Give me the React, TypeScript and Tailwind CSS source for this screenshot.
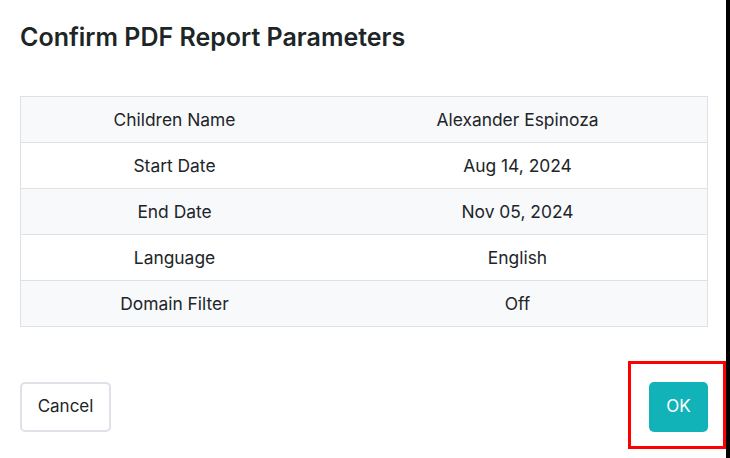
import React from "react";

const rows: [string, string][] = [
  ["Children Name", "Alexander Espinoza"],
  ["Start Date", "Aug 14, 2024"],
  ["End Date", "Nov 05, 2024"],
  ["Language", "English"],
  ["Domain Filter", "Off"],
];

export default function App() {
  return (
    <div
      className="relative w-[730px] h-[458px] bg-white overflow-hidden flex"
      style={{ fontFamily: "Inter, 'Liberation Sans', sans-serif" }}
    >
      <div className="w-[726px] flex flex-col pl-[20px] pt-[19px]">
        <h1 className="text-[25px] leading-[36px] font-semibold text-[#1d2527]">
          Confirm PDF Report Parameters
        </h1>
        <div className="mt-[41px] w-[688px] border-x border-t border-[#dee2e6] text-[17.4px] text-[#212529]">
          {rows.map(([k, v], i) => (
            <div
              key={k}
              className={`grid grid-cols-[307px_1fr] h-[46px] pt-[1px] items-center text-center border-b border-[#dee2e6] ${
                i % 2 === 0 ? "bg-[#f8f9fb]" : "bg-white"
              }`}
            >
              <span>{k}</span>
              <span>{v}</span>
            </div>
          ))}
        </div>
        <div className="mt-[55px] w-[688px] flex justify-between items-center">
          <button className="h-[50px] w-[91px] border-2 border-[#dfe1e8] rounded-[5px] text-[17px] text-[#212529] bg-white">
            Cancel
          </button>
          <div className="relative">
            <button className="h-[50px] w-[59px] rounded-[5px] bg-[#12b3b8] text-white text-[17px]">
              OK
            </button>
            <div className="absolute left-[-21px] top-[-21px] w-[98px] h-[88px] border-[3px] border-[#ff0000]" />
          </div>
        </div>
      </div>
      <div className="w-[4px] h-full bg-black" />
    </div>
  );
}
